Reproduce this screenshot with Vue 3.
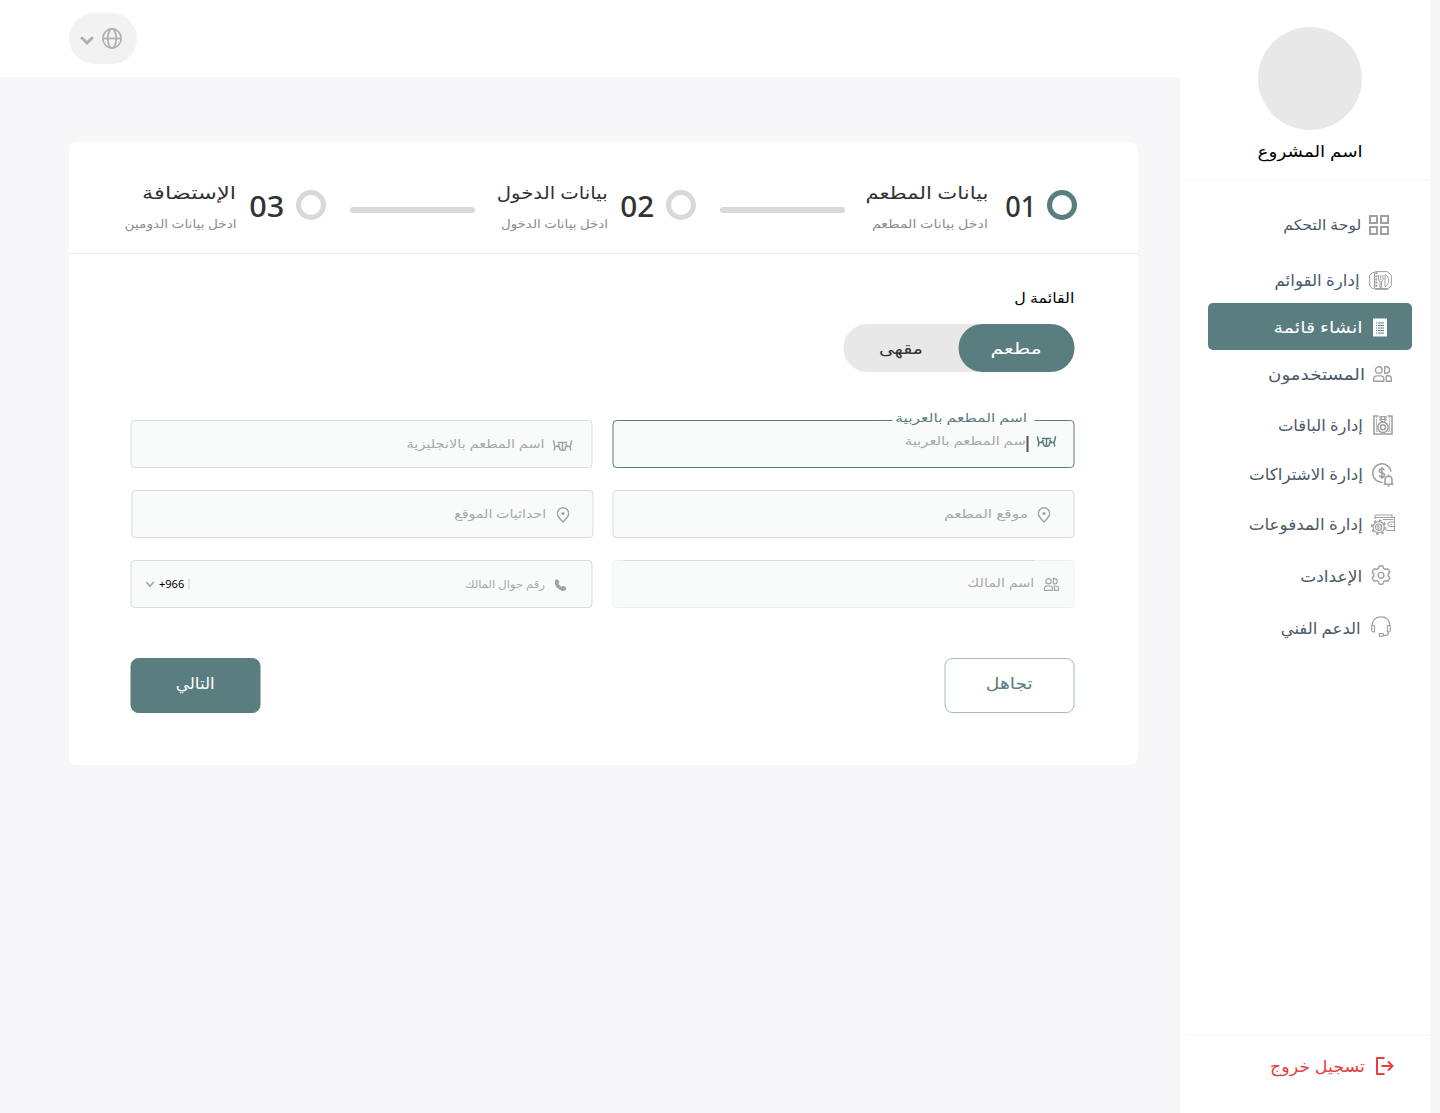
<script setup>
const navItems = [
  { label: 'لوحة التحكم', icon: 'grid', w: 78, size: 14.5, gap: 0, inset: 23, space: 8, iw: 20, ih: 20, dy: -1, iy: 0 },
  { label: 'إدارة القوائم', icon: 'plate', w: 85, size: 16, gap: 9, inset: 20, space: 9, iw: 23, ih: 19, dy: -1, iy: 0 },
  { label: 'انشاء قائمة', icon: 'list', w: 89, size: 16, gap: -1, inset: 25, space: 10, iw: 14, ih: 19, active: true, dy: 0, iy: 1 },
  { label: 'المستخدمون', icon: 'users', w: 97, size: 16, gap: 1, inset: 20, space: 8, iw: 19, ih: 16, dy: -1, iy: -0.5 },
  { label: 'إدارة الباقات', icon: 'badge', w: 85, size: 16, gap: 3, inset: 19, space: 10, iw: 20, ih: 20, dy: 0, iy: 0 },
  { label: 'إدارة الاشتراكات', icon: 'dollar', w: 114, size: 16, gap: 3, inset: 18, space: 9, iw: 22, ih: 24, dy: -1, iy: 0 },
  { label: 'إدارة المدفوعات', icon: 'wallet', w: 114, size: 16, gap: 3, inset: 17, space: 8, iw: 24, ih: 22, dy: -1, iy: 0 },
  { label: 'الإعدادت', icon: 'gear', w: 62, size: 16, gap: 5, inset: 21, space: 9, iw: 20, ih: 21, dy: -1, iy: -1 },
  { label: 'الدعم الفني', icon: 'headset', w: 80, size: 16, gap: 4, inset: 21, space: 10, iw: 20, ih: 21, dy: 0, iy: -1 },
]

const steps = [
  { num: '01', nw: 31, title: 'بيانات المطعم', tw: 123, sub: 'ادخل بيانات المطعم', sw: 116, current: true },
  { num: '02', nw: 34, title: 'بيانات الدخول', tw: 111, sub: 'ادخل بيانات الدخول', sw: 107 },
  { num: '03', nw: 35, title: 'الإستضافة', tw: 94, sub: 'ادخل بيانات الدومين', sw: 112 },
]

// Condenses or widens a label to the given width and keeps its layout box in step.
const vFit = {
  mounted(el, { value }) {
    const natural = el.getBoundingClientRect().width
    if (!natural) return
    el.style.transform = `scaleX(${value / natural})`
    el.style.marginLeft = `${value - natural}px`
  },
}
</script>

<template>
  <svg class="defs" width="0" height="0">
    <symbol id="i-grid" viewBox="0 0 20 20"><path d="M1 1h7v7H1zM12 1h7v7h-7zM1 12h7v7H1zM12 12h7v7h-7z" fill="none" stroke="currentColor" stroke-width="2" /></symbol>
    <symbol id="i-plate" viewBox="0 0 23 19">
      <g fill="none" stroke="currentColor" stroke-width="1">
        <path d="M3.500 1.500H5.500V17.500H3.500L.6 14.500V4.500zM19.500 1.500 22.400 4.500V14.500L19.500 17.500H6.500M6 .6H18.500L20 2.500M6 18.400H18.500L20 16.500" />
        <path d="M16 3.500c5 2.500 5 9.500 0 12zM9.500 4v4.500c0 1 .5 1.500 1.500 1.500v6.500h1.500V10c1 0 1.500-.5 1.500-1.500V4M11.700 4v5" />
        <path d="M7.300 1v17" stroke-dasharray="2 1.200" stroke-width="2" />
      </g>
    </symbol>
    <symbol id="i-list" viewBox="0 0 14 19">
      <path d="M0 .5H14V18.500H0z" fill="currentColor" />
      <path d="M3 5h1M5 5h6M3 7.500h1M5 7.500h6M3 10h1M5 10h6M3 12.500h1M5 12.500h6M3 15h1M5 15h6" stroke="#5a7d7f" stroke-width="1" />
    </symbol>
    <symbol id="i-users" viewBox="0 0 19 16">
      <g fill="none" stroke="currentColor" stroke-width="1.400" stroke-linejoin="round">
        <circle cx="5.800" cy="4" r="3.300" />
        <path d="M11.700 .8h1.600a3.200 3.200 0 0 1 0 6.400h-1.600zM.7 12.700C.7 10.800 2.200 9.900 4 9.900h3.600c1.800 0 3.200.9 3.200 2.800v2.500H.7zM13.200 9.800h1.800c2 0 3.300 1.200 3.300 3v2.400h-5.100z" />
      </g>
    </symbol>
    <symbol id="i-badge" viewBox="0 0 20 20">
      <g fill="none" stroke="currentColor">
        <path d="M5.500 1H1v18h18V1h-4.500" stroke-width="1.600" />
        <path d="M3.500 4v12.500h2M16.500 4v12.500h-2M3.500 1v2M16.500 1v2" stroke-width=".7" />
        <path d="M7 1v4l3 2.500L13 5V1M8.500 1.500h3v3h-3z" stroke-width="1.200" />
        <circle cx="10" cy="12.300" r="5.200" stroke-width="1.500" />
        <circle cx="10" cy="12.300" r="2.500" stroke-width="1.600" />
      </g>
    </symbol>
    <symbol id="i-dollar" viewBox="0 0 22 24">
      <g fill="none" stroke="currentColor" stroke-width="1.600">
        <path d="M10.500 19.200A9.200 9.200 0 1 1 19 8.500" />
        <path d="M12.300 7.200C11.800 6 10.800 5.700 9.800 5.700c-1.500 0-2.500.8-2.500 2 0 3 5.200 1.300 5.200 4.300 0 1.300-1.100 2.200-2.600 2.200-1.400 0-2.400-.6-2.800-1.900M9.900 4v12" />
        <path d="M11.500 21.200h10M13 21v-4c0-2.300 1.300-3.800 3.500-3.800S20 14.700 20 17v4M16.500 11.500v2M15.500 23h2" />
      </g>
    </symbol>
    <symbol id="i-wallet" viewBox="0 0 24 22">
      <g fill="none" stroke="currentColor" stroke-width="1.100">
        <path d="M4 5V2.500c0-1 .8-1.500 1.500-1.500H21v3M4 3.500h19.500v13H15M12 5.500h10M23.500 8h-4.300a2 2 0 0 0 0 4.500h4.300M19.500 10.300h1.500" />
        <circle cx="7.700" cy="13.200" r="5.600" />
        <circle cx="7.700" cy="13.200" r="6.900" stroke-width="1.700" stroke-dasharray="2.700 2.719" />
        <circle cx="7.700" cy="13.200" r="3.200" />
        <path d="M7.700 10.500v5.500M6.300 11v4.500M9.100 11v4.500" stroke-width=".8" />
      </g>
    </symbol>
    <symbol id="i-gear" viewBox="0 0 20 21">
      <g fill="none" stroke="currentColor" stroke-width="1.400" stroke-linejoin="round">
        <path d="M7.700 2.200Q8 .7 9.300.7h1.400q1.300 0 1.600 1.500l.3 1.100q1 .5 1.800 1.100l1.500-.4q1.200-.3 1.800.8l.7 1.200q.7 1.200-.4 2.100l-.9.800q.2 1 0 2.200l.9.800q1.100.9.400 2.100l-.7 1.200q-.6 1.100-1.800.8l-1.500-.4q-.8.600-1.800 1.100l-.3 1.100q-.3 1.500-1.600 1.500H9.300q-1.300 0-1.600-1.500l-.3-1.100q-1-.5-1.800-1.100l-1.500.4q-1.200.3-1.800-.8L1.600 14q-.7-1.200.4-2.100l.9-.8q-.2-1 0-2.200L2 8.100Q.9 7.200 1.600 6l.7-1.200Q2.900 3.700 4.100 4l1.500.4Q6.400 3.800 7.400 3.300z" />
        <circle cx="10" cy="10.300" r="2.900" />
      </g>
    </symbol>
    <symbol id="i-headset" viewBox="0 0 20 21">
      <g fill="none" stroke="currentColor" stroke-width="1.200">
        <path d="M1.200 9.500C1.200 4 5 .9 10 .9s8.800 3.100 8.800 8.600M.7 9.500h2.800v6.300H2.400C1.300 15.800.7 15 .7 14zM19.300 9.500h-2.800v6.300h1.100c1.100 0 1.700-.8 1.700-1.800zM17.800 15.800c0 2.500-1.500 3.600-4 3.600h-1.600M8.300 17.500h3.900v2.700H8.300z" />
      </g>
    </symbol>
    <symbol id="i-table" viewBox="0 0 20 11">
      <g fill="none" stroke="currentColor" stroke-width="1.500">
        <path d="M5.300 2.500h9.400M10 2.500v7.800M8 10.200h4M.8.300l1.500 6.200h4.400l1 3.700M2.500 6.500 1.700 10.500M4.500 6.500 7 4M19.200.3l-1.500 6.200h-4.400l-1 3.700M17.500 6.500l.8 4M15.500 6.500 13 4" />
      </g>
    </symbol>
    <symbol id="i-pin" viewBox="0 0 13 16">
      <path d="M6.500 15C3.500 12 .8 9.500.8 6.500a5.700 5.700 0 0 1 11.400 0C12.200 9.500 9.500 12 6.500 15z" fill="none" stroke="currentColor" stroke-width="1.500" />
      <circle cx="6.500" cy="6.500" r="1.600" fill="currentColor" />
    </symbol>
    <symbol id="i-phone" viewBox="0 0 12 12">
      <path d="M.9 1C1.700.1 2.900 0 3.600.9l1 1.500c.5.8.1 1.500-.6 2.100.6 1.400 1.800 2.600 3.300 3.300.7-.8 1.400-1.200 2.200-.7l1.500 1c.9.700.9 1.900 0 2.800C8.800 12.900 5.200 11.200 2.900 8.900.6 6.600-.9 3 .9 1z" fill="currentColor" />
    </symbol>
    <symbol id="i-globe" viewBox="0 0 20 21">
      <g fill="none" stroke="currentColor" stroke-width="1.700">
        <ellipse cx="10" cy="10.500" rx="9.100" ry="9.600" /><ellipse cx="10" cy="10.500" rx="4.200" ry="9.600" /><path d="M1 10.500h18" />
      </g>
    </symbol>
    <symbol id="i-exit" viewBox="0 0 19 20">
      <path d="M9.500 2H2v16h7.500M6.500 10H17M13 5.500l4.500 4.500-4.500 4.500" fill="none" stroke="currentColor" stroke-width="2" stroke-linejoin="round" />
    </symbol>
  </svg>

  <div class="page" dir="rtl">
    <aside class="sidebar">
      <div class="brand">
        <div class="avatar"></div>
        <h2 class="brand-name"><span v-fit="105" class="fit">اسم المشروع</span></h2>
      </div>
      <nav class="nav">
        <a
          v-for="item in navItems"
          :key="item.label"
          class="nav-item"
          :class="{ active: item.active }"
          :style="{ marginTop: item.gap + 'px', paddingRight: item.inset + 'px', gap: item.space + 'px', fontSize: item.size + 'px' }"
        >
          <svg class="icon" :width="item.iw" :height="item.ih" :style="{ marginTop: item.iy * 2 + 'px' }"><use :href="'#i-' + item.icon" /></svg>
          <span v-fit="item.w" class="fit" :style="{ marginTop: item.dy * 2 + 'px' }">{{ item.label }}</span>
        </a>
      </nav>
      <a class="logout">
        <svg width="19" height="20"><use href="#i-exit" /></svg>
        <span v-fit="95" class="fit">تسجيل خروج</span>
      </a>
    </aside>

    <main class="main">
      <header class="topbar">
        <button class="lang">
          <svg class="globe" width="20" height="21"><use href="#i-globe" /></svg>
          <svg class="arrow" width="14" height="9" viewBox="0 0 14 9"><path d="M2 2l5 5 5-5" fill="none" stroke="currentColor" stroke-width="3" stroke-linecap="round" /></svg>
        </button>
      </header>

      <section class="card">
        <ol class="steps">
          <template v-for="(step, i) in steps" :key="step.num">
            <li class="step" :class="{ current: step.current }">
              <span class="ring"></span>
              <span class="num"><span v-fit="step.nw" class="fit">{{ step.num }}</span></span>
              <div class="step-text">
                <div class="step-title"><span v-fit="step.tw" class="fit">{{ step.title }}</span></div>
                <div class="step-sub"><span v-fit="step.sw" class="fit">{{ step.sub }}</span></div>
              </div>
            </li>
            <li v-if="i < 2" class="bar"></li>
          </template>
        </ol>

        <form class="form" @submit.prevent>
          <div class="kind-label"><span v-fit="60" class="fit">القائمة ل</span></div>
          <div class="toggle">
            <span class="option on"><span v-fit="51" class="fit">مطعم</span></span>
            <span class="option"><span v-fit="44" class="fit">مقهى</span></span>
          </div>

          <div class="fields">
            <div class="field focused">
              <span class="legend"><span v-fit="132" class="fit">اسم المطعم بالعربية</span></span>
              <svg class="f-icon" width="20" height="11"><use href="#i-table" /></svg>
              <span class="caret"></span>
              <span v-fit="121" class="fit hint">سم المطعم بالعربية</span>
            </div>
            <div class="field name-en">
              <svg class="f-icon" width="20" height="11"><use href="#i-table" /></svg>
              <span v-fit="138" class="fit hint">اسم المطعم بالانجليزية</span>
            </div>
            <div class="field place">
              <svg class="f-icon" width="13" height="16"><use href="#i-pin" /></svg>
              <span v-fit="84" class="fit hint">موقع المطعم</span>
            </div>
            <div class="field place coords">
              <svg class="f-icon" width="13" height="16"><use href="#i-pin" /></svg>
              <span v-fit="92" class="fit hint">احداثيات الموقع</span>
            </div>
            <div class="field owner">
              <svg class="f-icon" width="16" height="13"><use href="#i-users" /></svg>
              <span v-fit="67" class="fit hint">اسم المالك</span>
            </div>
            <div class="field phone">
              <svg class="f-icon" width="12" height="12"><use href="#i-phone" /></svg>
              <span v-fit="80" class="fit hint">رقم جوال المالك</span>
              <span class="code" dir="ltr">
                <svg width="9" height="7" viewBox="0 0 9 7"><path d="M.8 1l3.700 4.200L8.200 1" fill="none" stroke="#a3abab" stroke-width="1.700" /></svg>
                <b>+966</b><i></i>
              </span>
            </div>
          </div>

          <div class="actions">
            <button class="btn skip"><span v-fit="47" class="fit">تجاهل</span></button>
            <button class="btn next"><span v-fit="39" class="fit">التالي</span></button>
          </div>
        </form>
      </section>
    </main>
  </div>
</template>

<style>
body { margin: 0; background: #f7f7f9; }
</style>

<style scoped>
* { box-sizing: border-box; }
.defs { position: absolute; }
.page { display: flex; width: 1440px; height: 1113px; padding-right: 10px; overflow: hidden; background: #f7f7f9; font-family: "Noto Sans", "DejaVu Sans", sans-serif; }
.fit { display: inline-block; flex: none; white-space: nowrap; transform-origin: right center; }
svg { display: block; flex: none; }
button { font: inherit; padding: 0; }

.sidebar { display: flex; flex-direction: column; flex: none; width: 250px; height: 1113px; background: #fff; }
.brand { display: flex; flex-direction: column; align-items: center; width: 245px; height: 181px; padding: 27px 0 0; border-bottom: 2px solid #f9f9f9; }
.avatar { flex: none; width: 104px; height: 103px; margin-left: 5px; border-radius: 50%; background: #e8e8e8; }
.brand-name { margin: 5px 0 0 5px; font-size: 16px; font-weight: 500; line-height: 32px; color: #000; }
.nav { display: flex; flex-direction: column; padding: 20px 18px 0 28px; color: #4c5968; }
.nav-item { display: flex; align-items: center; height: 47px; border-radius: 5px; line-height: 24px; }
.icon { color: #a0a0a0; }
.active { background: #5a7d7f; color: #fff; }
.active .icon { color: #fff; }
.logout { display: flex; align-items: center; gap: 10px; width: 245px; height: 79px; margin-top: auto; padding: 0 36px 17px 0; border-top: 2px solid #f9f9f9; color: #e53e3e; font-size: 16px; }

.main { flex: none; width: 1180px; }
.topbar { display: flex; justify-content: flex-end; height: 77px; padding: 13px 0 0 69px; background: #fff; }
.lang { display: flex; align-items: center; gap: 8px; width: 68px; height: 51px; padding-right: 15px; border: 0; border-radius: 26px; background: #f2f2f2; color: #afafaf; }
.arrow { margin-top: 3px; }

.card { width: 1069px; height: 623px; margin: 65px 42px 0 0; border-radius: 8px; background: #fff; }
.steps { display: flex; height: 112px; margin: 0; padding: 0 61px 0 0; border-bottom: 1px solid #ebebeb; list-style: none; color: #333; }
.step { display: flex; flex: none; width: 232.5px; height: 111px; }
.bar { flex: none; width: 125px; height: 6px; margin: 65px 0 0 24px; border-radius: 3px; background: #d9d9d9; }
.step:nth-child(3) { width: 221px; }
.ring { flex: none; width: 30px; height: 30px; margin-top: 47.5px; border: 5px solid #d9d9d9; border-radius: 50%; }
.current .ring { border-color: #5a7d7f; }
.num { margin: 44px 11px 0 0; font-size: 29px; font-weight: 500; line-height: 40px; }
.step-text { margin: 33px 13px 0 0; }
.current .step-text { margin-right: 17px; }
.step-title { font-size: 17.5px; line-height: 34px; }
.step-sub { font-size: 12px; line-height: 29px; color: #8c8c8c; }

.form { padding: 31px 63.5px 0 61.5px; transform: translateX(-.5px); }
.kind-label { height: 39px; font-size: 14px; line-height: 26px; color: #000; }
.toggle { display: flex; width: 231px; height: 48px; border-radius: 24px; background: #e8e8e8; font-size: 16px; color: #333; }
.option { display: flex; flex: none; align-items: center; justify-content: center; width: 115.5px; padding-bottom: 1px; border-radius: 24px; }
.on { background: #5a7d7f; color: #fff; }

.fields { display: grid; grid-template-columns: 462px 462px; gap: 22px 20px; margin-top: 48px; }
.field { position: relative; display: flex; align-items: center; height: 48px; padding-right: 19px; border: 1px solid #d6dcdc; border-radius: 4px; background: #f9fbfa; font-size: 12px; color: #a3abab; }
.hint { line-height: 20px; }
.f-icon { color: #a3a3a3; }
.focused { padding-right: 17px; padding-bottom: 5px; border-color: #5a7d7f; }
.focused .f-icon { color: #5a7d7f; }
.focused .hint { margin-top: -2px; }
.legend { position: absolute; top: -14px; right: 39px; height: 20px; padding: 0 7px 0 3px; background: linear-gradient(#fff 13px, #f9fbfa 13px); color: #5a7d7f; line-height: 22px; }
.caret { width: 2px; height: 16px; margin: 4px 8px 0 0; background: #555; }
.name-en .hint { margin-right: 7px; }
.name-en .f-icon { margin-top: 2px; }
.place { padding-right: 22.500px; }
.place .f-icon { margin: 1px 0 0 10px; }
.coords { right: -1px; }
.coords .f-icon { margin-left: 10px; }
.owner { padding-right: 13.500px; border-color: #eef0f0; }
.owner::before { content: ""; position: absolute; top: -1px; right: 39px; width: 411px; height: 1px; background: #d6dcdc; }
.owner .f-icon { margin-left: 9px; }
.owner .hint { margin-top: -2px; }
.phone { padding-right: 25px; font-size: 10.5px; }
.phone .f-icon { margin: 2px 0 0 9px; }
.code { display: flex; align-items: center; margin: 0 auto 0 14px; color: #000; font-size: 11px; }
.code b { margin: -2px 0 0 5px; font-weight: 400; }
.code i { width: 1px; height: 10px; margin-left: 4px; background: #c5caca; }

.actions { display: flex; justify-content: space-between; margin-top: 50px; }
.btn { width: 130px; height: 55px; padding-bottom: 5px; border: 1px solid #a5baba; border-radius: 8px; background: #fff; color: #5a7d7f; font-size: 16px; }
.next { border-color: #5a7d7f; background: #5a7d7f; color: #fff; }
</style>
